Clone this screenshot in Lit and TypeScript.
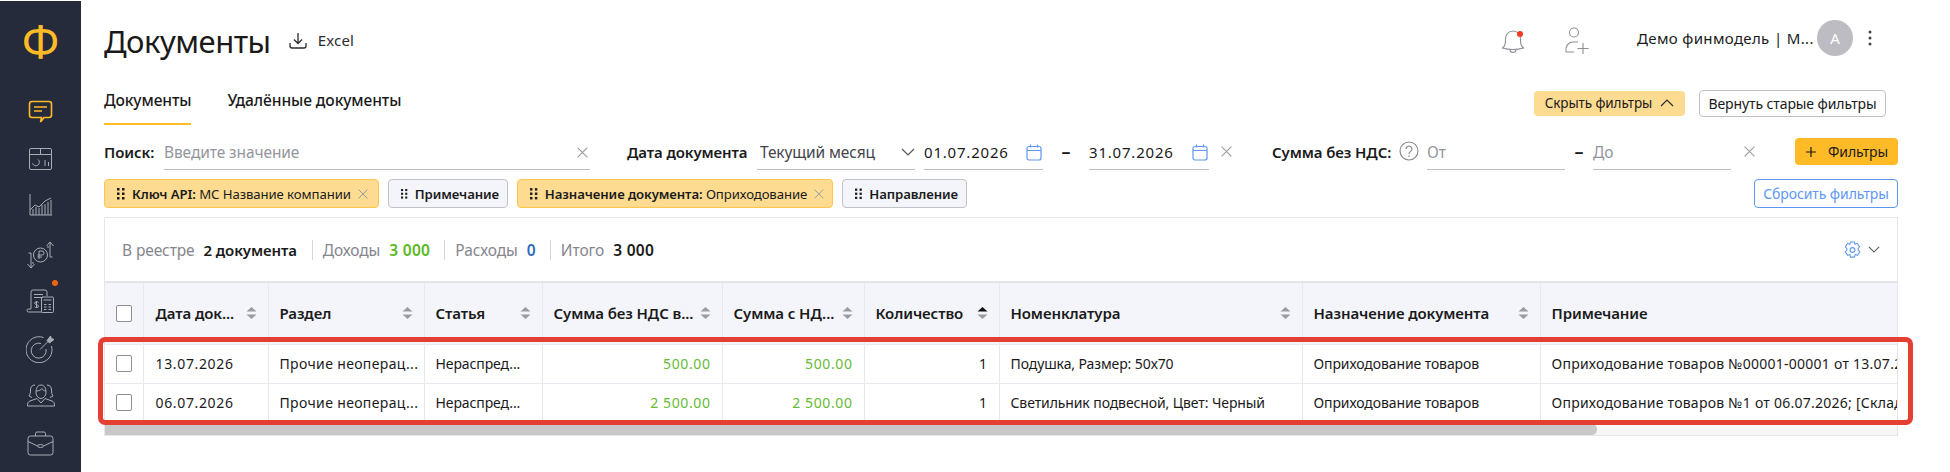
import { LitElement, html, css, svg } from "lit";
import { customElement } from "lit/decorators.js";

const sideIcons = [
  svg`<path d="M6 2.500h17a2.500 2.500 0 0 1 2.500 2.500v11a2.500 2.500 0 0 1-2.500 2.500h-5l-1.500 2-2 2.500 1-4.500H6A2.500 2.500 0 0 1 3.500 16V5A2.500 2.500 0 0 1 6 2.500z" stroke="#ffbb27" stroke-width="1.6"/><path d="M8 8h13M8 12h8" stroke="#ffbb27" stroke-width="1.6"/>`,
  svg`<rect x="3.500" y="2.500" width="22" height="21" rx="1.500"/><path d="M3.500 8.500h22M14.500 2.500v6M19 14v6M22.500 16v4"/><path d="M12 13.500a3.500 3.500 0 1 1-5.500 3.800" />`,
  svg`<path d="M4 1v21h22M7 22v-6M10 22v-8M13 22v-7M16 22v-10M19 22V11M22 22V9M25 22V7"/><path d="M4 17l5-5 4 2 6-6 6-3"/>`,
  svg`<circle cx="14.500" cy="14" r="7"/><path d="M13 18v-8h3a2 2 0 0 1 0 4h-4.500M11.500 16H16"/><path d="M5 27V12h-2.500M5 27l-3.500-4M5 27l3.500-4M8 22H6M24 1v15h2.500M24 1l-3.500 4M24 1l3.500 4M21 6h2"/>`,
  svg`<path d="M5 21V4a2 2 0 0 1 2-2h12a2 2 0 0 1 2 2v4M5 21H2.500a1.500 1.500 0 0 0 0 3H16M8 6.500h9M8 9.500h9"/><path d="M10.500 13v7M12.500 14.500c-1-1-4-1-4 .7s4 1 4 3-3 1.500-4 .6"/><rect x="15.500" y="9" width="12" height="15.500" rx="1"/><path d="M17.500 12h8M18 16.500h2.500M22.500 16.500h2.500M18 19h2.500M22.500 19h2.500M18 21.500h2.500M22.500 21.500h2.500"/>`,
  svg`<path d="M17.500 2.500A13 13 0 1 0 25.500 11"/><path d="M15 8.500A7.500 7.500 0 1 0 20 14"/><path d="M14 14.500L23 5.500"/><path d="M21 5.500l3.500-4.500 1 2.500 2.500 1-4.500 3.500z" fill="#a9adb6"/>`,
  svg`<path d="M10 11c0-5 1.500-8 5-8s5 3 5 8c0 2.500-2.500 5.500-5 5.500S10 13.500 10 11z"/><path d="M10 9c3 0 5-1 6-2.500 .5 1.500 2 2.500 4 2.500"/><path d="M9 3c-3 0-4.500 2-4.500 5 0 3-.5 4.500-1.500 6l3 1.500M21 3c3 0 4.500 2 4.500 5 0 3 .5 4.500 1.500 6l-3 1.500"/><path d="M11 16.500L4 19c-2 .8-2.500 2-2.500 5h27c0-3-.5-4.200-2.500-5l-7-2.500-4 4.500z"/>`,
  svg`<rect x="2" y="6" width="25" height="19" rx="2.500"/><path d="M9.500 6V3.500A1.500 1.500 0 0 1 11 2h7a1.500 1.500 0 0 1 1.500 1.500V6M2 11.500l9.500 4.500M27 11.500L17.500 16M11.500 16a3 1.500 0 0 1 6 0 3 1.500 0 0 1-6 0z"/>`,
];

const columns = [
  { title: "Дата док...", sort: true },
  { title: "Раздел", sort: true },
  { title: "Статья", sort: true },
  { title: "Сумма без НДС в...", sort: true },
  { title: "Сумма с НД...", sort: true },
  { title: "Количество", sort: true, active: true },
  { title: "Номенклатура", sort: true },
  { title: "Назначение документа", sort: true },
  { title: "Примечание", sort: false },
];

const widths = [38, 125, 156, 118, 180, 142, 135, 303, 238, 400];

const rows = [
  ["13.07.2026", "Прочие неоперац...", "Нераспред...", "500.00", "500.00", "1", "Подушка, Размер: 50х70", "Оприходование товаров", "Оприходование товаров №00001-00001 от 13.07.2026; [Склад]"],
  ["06.07.2026", "Прочие неоперац...", "Нераспред...", "2 500.00", "2 500.00", "1", "Светильник подвесной, Цвет: Черный", "Оприходование товаров", "Оприходование товаров №1 от 06.07.2026; [Склад: Основной]"],
];

const cellClass = ["date", "section", "", "num money", "num money", "num", "", "", "note"];

const grip = html`<svg class="grip" viewBox="0 0 8 12" width="8" height="12"><g fill="#1c1c1c"><rect x="0" y="0" width="2.500" height="2.500"/><rect x="5" y="0" width="2.500" height="2.500"/><rect x="0" y="4.500" width="2.500" height="2.500"/><rect x="5" y="4.500" width="2.500" height="2.500"/><rect x="0" y="9" width="2.500" height="2.500"/><rect x="5" y="9" width="2.500" height="2.500"/></g></svg>`;
const cross = (size = 11) => html`<svg class="cross" viewBox="0 0 10 10" width=${size} height=${size}><path d="M.5 .5l9 9M9.500 .5l-9 9" stroke="#9c9ca4" stroke-width="1" fill="none"/></svg>`;
const chevron = (up = false, color = "#55565c", w = 14) => html`<svg viewBox="0 0 14 8" width=${w} height=${(w * 8) / 14}><path d=${up ? "M1 7l6-6 6 6" : "M1 1l6 6 6-6"} stroke=${color} stroke-width="1.200" fill="none"/></svg>`;
const calendar = html`<svg viewBox="0 0 16 17" width="16" height="17" fill="none" stroke="#5e97f2" stroke-width="1.200"><rect x="1" y="2.500" width="14" height="13.500" rx="2"/><path d="M1 6.500h14M4.500 .5v3M11.500 .5v3"/></svg>`;

@customElement("app-root")
export class AppRoot extends LitElement {
  static styles = css`
    :host {
      display: flex;
      width: 1950px;
      height: 472px;
      overflow: hidden;
      background: #fff;
      font-family: "Noto Sans", sans-serif;
      font-size: 14px;
      color: #1a1a1a;
      letter-spacing: -0.1px;
    }

    .sidebar {
      width: 81px;
      flex: none;
      margin-top: 1px;
      background: #252b3a;
      display: flex;
      flex-direction: column;
      align-items: center;
    }

    .logo {
      height: 88px;
      padding-top: 9px;
      box-sizing: border-box;
      font-size: 46px;
      line-height: 60px;
      color: #ffbb27;
    }

    .side-item {
      height: 47.3px;
      display: flex;
      align-items: center;
      justify-content: center;
      position: relative;
    }

    .side-item svg {
      fill: none;
      stroke: #a9adb6;
      stroke-width: 1;
    }

    .side-dot {
      position: absolute;
      top: 2px;
      right: -3px;
      width: 6px;
      height: 6px;
      border-radius: 50%;
      background: #f26411;
    }

    .main {
      flex: 1;
      min-width: 0;
      padding: 0 52px 0 23px;
    }

    .header {
      height: 76px;
      display: flex;
      align-items: center;
    }

    .title {
      font-size: 31px;
      letter-spacing: -0.5px;
      margin-top: 6px;
      line-height: 40px;
    }

    .excel {
      display: flex;
      align-items: center;
      gap: 11px;
      margin-left: 18px;
      font-size: 15px;
      letter-spacing: 0.2px;
      color: #2b2c30;
      margin-top: 4px;
    }

    .header-right {
      margin-left: auto;
      display: flex;
      align-items: center;
    }

    .bell {
      position: relative;
      display: flex;
      margin-top: 6px;
      margin-right: 38px;
    }

    .bell i {
      position: absolute;
      top: 3px;
      right: 2px;
      width: 6px;
      height: 6px;
      border-radius: 50%;
      background: #f5391f;
    }

    .invite {
      display: flex;
      margin-top: 5px;
      margin-right: 44px;
    }

    .name {
      font-size: 15px;
      letter-spacing: 0.35px;
      width: 170px;
      white-space: nowrap;
    }

    .avatar {
      width: 36px;
      height: 36px;
      border-radius: 50%;
      background: #bcbcc2;
      color: #fff;
      display: flex;
      align-items: center;
      justify-content: center;
      font-size: 15px;
      margin-left: 10px;
    }

    .more {
      display: flex;
      margin-left: 15px;
      margin-right: 26px;
    }

    .tabs-row {
      height: 49px;
      display: flex;
      align-items: stretch;
    }

    .tab {
      font-size: 15.6px;
      font-weight: 500;
      line-height: 48px;
      margin-right: 36px;
      height: 49px;
      box-sizing: border-box;
    }

    .tab.active {
      border-bottom: 2px solid #ffbb27;
    }

    .tabs-right {
      margin-left: auto;
      display: flex;
      align-items: center;
      gap: 14px;
      padding-top: 5px;
      margin-right: 12px;
    }

    .btn {
      display: flex;
      align-items: center;
      box-sizing: border-box;
      height: 27px;
      border-radius: 4px;
      font-size: 14px;
      white-space: nowrap;
    }

    .btn-hide {
      width: 151px;
      height: 25px;
      justify-content: center;
      gap: 8px;
      background: #fddc92;
      font-size: 13.5px;
    }

    .btn-old {
      width: 187px;
      justify-content: center;
      border: 1px solid #c0c1c7;
    }

    .filters {
      height: 37px;
      margin-top: 8px;
      display: flex;
      align-items: flex-start;
      position: relative;
    }

    .label {
      font-weight: 600;
      font-size: 15px;
      white-space: nowrap;
      line-height: 38px;
    }

    .field {
      height: 34px;
      padding-top: 2px;
      border-bottom: 1px solid #bdbec3;
      display: flex;
      align-items: center;
      justify-content: space-between;
      box-sizing: content-box;
      white-space: nowrap;
      font-size: 15.5px;
    }

    .field.search .cross {
      margin-right: 2px;
    }

    .date-value {
      font-size: 15px;
      letter-spacing: 0.8px;
    }

    .placeholder {
      color: #94959c;
    }

    .select-value {
      color: #44454a;
      padding-left: 3px;
    }

    .dash {
      line-height: 36px;
      font-size: 18px;
      font-weight: 600;
      text-align: center;
    }

    .flex-cross {
      height: 36px;
      display: flex;
      align-items: center;
    }

    .btn-add {
      width: 103px;
      height: 27px;
      margin-left: auto;
      margin-top: 5px;
      background: #ffbb27;
      justify-content: center;
      gap: 11px;
    }

    .chips {
      margin-top: 9px;
      height: 29px;
      display: flex;
      gap: 9px;
    }

    .chip {
      box-sizing: border-box;
      height: 29px;
      display: flex;
      align-items: center;
      gap: 7px;
      padding: 0 8px 0 12px;
      border: 1px solid #c2c3c9;
      border-radius: 4px;
      background: #f4f5fa;
      font-size: 13.2px;
      white-space: nowrap;
    }

    .chip.on {
      background: #fddc92;
      border-color: #ffc54d;
    }

    .chip b {
      font-weight: 600;
    }

    .btn-reset {
      margin-left: auto;
      width: 144px;
      height: 29px;
      justify-content: center;
      color: #5e97f2;
      border: 1px solid #5e97f2;
    }

    .panel {
      margin-top: 9px;
      position: relative;
      box-sizing: border-box;
      width: 1794px;
      border: 1px solid #e6e6ea;
    }

    .summary {
      height: 63px;
      display: flex;
      align-items: center;
      padding: 0 17px;
      font-size: 15.5px;
      box-sizing: border-box;
    }

    .group {
      display: flex;
      gap: 9px;
      padding: 0 14px 0 10px;
      line-height: 20px;
      border-left: 1px solid #d6d7dc;
      white-space: nowrap;
    }

    .group:first-child {
      border-left: 0;
      padding-left: 0;
      padding-right: 15px;
    }

    .group:first-child b {
      font-size: 15px;
      letter-spacing: -0.1px;
    }

    .muted {
      color: #85868e;
    }

    .group b {
      font-weight: 600;
      letter-spacing: 0.3px;
    }

    .green {
      color: #5ab81f;
    }

    .blue {
      color: #2c6cb8;
    }

    .settings {
      margin-left: auto;
      display: flex;
      align-items: center;
      gap: 6px;
    }

    .scroller {
      overflow: hidden;
      height: 141px;
      position: relative;
      border-top: 2px solid #e3e4ea;
    }

    table {
      table-layout: fixed;
      border-collapse: collapse;
      width: 1835px;
    }

    th,
    td {
      border-right: 1px solid #e8e8ee;
      padding: 0 11px;
      white-space: nowrap;
      overflow: hidden;
      box-sizing: border-box;
      text-align: left;
    }

    th:nth-child(2),
    td:nth-child(2) {
      padding-left: 12px;
    }

    th {
      height: 61px;
      background: #f4f5fa;
      font-weight: 600;
      font-size: 15px;
    }

    td {
      height: 39px;
      border-top: 1px solid #e8e8ee;
    }

    td.num {
      text-align: right;
      letter-spacing: 0.6px;
    }

    td.money {
      color: #66bb33;
    }

    td.date {
      letter-spacing: 0.65px;
    }

    td.section {
      letter-spacing: 0.35px;
    }

    td.note {
      letter-spacing: 0.25px;
    }

    .head {
      display: flex;
      align-items: center;
      justify-content: space-between;
    }

    .check {
      display: block;
      width: 16px;
      height: 17px;
      box-sizing: border-box;
      border: 1.5px solid #8e8f97;
      border-radius: 2px;
      background: #fff;
    }

    .track {
      height: 11px;
      background: #f7f7f8;
    }

    .thumb {
      height: 100%;
      width: 1492px;
      background: #c8c8c8;
      border-radius: 0 5px 5px 0;
    }

    .mark {
      position: absolute;
      left: -7px;
      right: -16px;
      top: 119px;
      height: 88px;
      box-sizing: border-box;
      border: 5px solid #e53e33;
      border-radius: 7px;
      pointer-events: none;
    }
  `;

  private sort(active = false) {
    return html`<svg viewBox="0 0 11 14" width="11" height="14" style="flex:none">
      <path d="M5.500 1L10.500 5.500H.5z" fill=${active ? "#111" : "#9a9ba3"} />
      <path d="M5.500 13L10.500 8.500H.5z" fill="#9a9ba3" />
    </svg>`;
  }

  render() {
    return html`
      <nav class="sidebar">
        <div class="logo">Ф</div>
        ${sideIcons.map(
          (icon, i) => html`<div class="side-item">
            <svg viewBox="0 0 29 28" width="29" height="28">${icon}</svg>
            ${i === 4 ? html`<span class="side-dot"></span>` : null}
          </div>`
        )}
      </nav>
      <main class="main">
        <header class="header">
          <div class="title">Документы</div>
          <div class="excel">
            <svg viewBox="0 0 18 17" width="18" height="17" fill="none" stroke="#2b2c30" stroke-width="1.300">
              <path d="M9 1v10M5 7.500l4 4 4-4M1 11v3a2 2 0 0 0 2 2h12a2 2 0 0 0 2-2v-3" />
            </svg>
            Excel
          </div>
          <div class="header-right">
            <span class="bell">
              <svg viewBox="0 0 24 26" width="24" height="26" fill="none" stroke="#8e8f96" stroke-width="1.100">
                <path d="M1.500 20c3-2.500 3-5 3-9s2.500-8 7.500-8 7.500 4 7.500 8 0 6.500 3 9c-3 1-7 1.500-10.500 1.500S4.500 21 1.500 20z" />
                <path d="M9 21.500c0 2 1.300 3 3 3s3-1 3-3" />
              </svg>
              <i></i>
            </span>
            <span class="invite">
              <svg viewBox="0 0 30 28" width="30" height="28" fill="none" stroke="#8e8f96" stroke-width="1.100">
                <circle cx="11" cy="5.500" r="4.500" />
                <path d="M3 25c-1-5 2-10 7-10h5M3 25h8M20 16v11M14.500 21.500h11" />
              </svg>
            </span>
            <span class="name">Демо финмодель | М...</span>
            <span class="avatar">А</span>
            <span class="more">
              <svg viewBox="0 0 4 16" width="4" height="16" fill="#44454a">
                <circle cx="2" cy="2" r="1.500" /><circle cx="2" cy="8" r="1.500" /><circle cx="2" cy="14" r="1.500" />
              </svg>
            </span>
          </div>
        </header>

        <div class="tabs-row">
          <div class="tab active">Документы</div>
          <div class="tab">Удалённые документы</div>
          <div class="tabs-right">
            <span class="btn btn-hide">Скрыть фильтры ${chevron(true, "#2b2c30")}</span>
            <span class="btn btn-old">Вернуть старые фильтры</span>
          </div>
        </div>

        <div class="filters">
          <span class="label" style="width:60px">Поиск:</span>
          <span class="field search" style="width:426px">
            <span class="placeholder">Введите значение</span>${cross()}
          </span>
          <span class="label" style="width:130px;margin-left:37px">Дата документа</span>
          <span class="field" style="width:158px">
            <span class="select-value">Текущий месяц</span>${chevron()}
          </span>
          <span class="field" style="width:119px;margin-left:9px">
            <span class="date-value">01.07.2026</span><span style="display:flex;margin-right:1px">${calendar}</span>
          </span>
          <span class="dash" style="width:46px">–</span>
          <span class="field" style="width:120px">
            <span class="date-value">31.07.2026</span><span style="display:flex;margin-right:1px">${calendar}</span>
          </span>
          <span class="flex-cross" style="margin-left:12px">${cross()}</span>
          <span class="label" style="width:127px;margin-left:40px">Сумма без НДС:</span>
          <span class="flex-cross" style="margin-right:8px">
            <svg viewBox="0 0 20 20" width="20" height="20" fill="none" stroke="#85868e" stroke-width="1.100">
              <circle cx="10" cy="10" r="9" />
              <path d="M7 8a3 3 0 1 1 4.500 2.600c-1 .6-1.500 1-1.500 2.400M10 14.500v1.500" />
            </svg>
          </span>
          <span class="field" style="width:138px"><span class="placeholder">От</span></span>
          <span class="dash" style="width:28px">–</span>
          <span class="field" style="width:138px"><span class="placeholder">До</span></span>
          <span class="flex-cross" style="margin-left:13px">${cross()}</span>
          <span class="btn btn-add">
            <svg viewBox="0 0 12 12" width="12" height="12"><path d="M6 1v10M1 6h10" stroke="#1a1a1a" stroke-width="1.200" /></svg>
            Фильтры
          </span>
        </div>

        <div class="chips">
          <span class="chip on" style="width:275px">${grip}<span><b>Ключ API:</b> МС Название компании</span>${cross(10)}</span>
          <span class="chip" style="width:120px">${grip}<b>Примечание</b></span>
          <span class="chip on" style="width:316px">${grip}<span><b>Назначение документа:</b> Оприходование</span>${cross(10)}</span>
          <span class="chip" style="width:125px">${grip}<b>Направление</b></span>
          <span class="btn btn-reset">Сбросить фильтры</span>
        </div>

        <section class="panel">
          <div class="summary">
            <span class="group"><span class="muted">В реестре</span><b>2 документа</b></span>
            <span class="group"><span class="muted">Доходы</span><b class="green">3 000</b></span>
            <span class="group"><span class="muted">Расходы</span><b class="blue">0</b></span>
            <span class="group"><span class="muted">Итого</span><b>3 000</b></span>
            <span class="settings">
              <svg viewBox="0 0 20 20" width="19" height="20" fill="none" stroke="#5e97f2" stroke-width="1.100">
                <path d="M8 1.500h4l.6 2.500 2.300-1 2.600 3.600-1.700 2 .2 1.400 1.700 2-2.400 3.600-2.400-1-.9 2.900H8l-.8-2.800-2.300 1-2.500-3.700 1.700-2v-1.400l-1.700-2 2.500-3.600 2.300 1z" />
                <circle cx="10" cy="10" r="2.500" />
              </svg>
              ${chevron(false, "#55565c", 12)}
            </span>
          </div>
          <div class="scroller">
            <table>
              <colgroup>${widths.map((w) => html`<col style="width:${w}px" />`)}</colgroup>
              <thead>
                <tr>
                  <th><span class="check"></span></th>
                  ${columns.map(
                    (c) => html`<th>
                      <div class="head"><span>${c.title}</span>${c.sort ? this.sort(c.active) : null}</div>
                    </th>`
                  )}
                </tr>
              </thead>
              <tbody>
                ${rows.map(
                  (row) => html`<tr>
                    <td><span class="check"></span></td>
                    ${row.map((v, i) => html`<td class=${cellClass[i]}>${v}</td>`)}
                  </tr>`
                )}
              </tbody>
            </table>
          </div>
          <div class="track"><div class="thumb"></div></div>
          <div class="mark"></div>
        </section>
      </main>
    `;
  }
}
